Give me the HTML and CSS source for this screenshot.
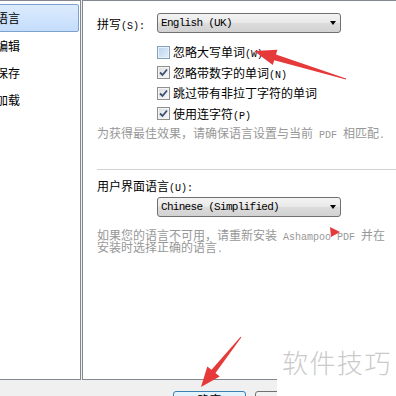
FILE: index.html
```html
<!DOCTYPE html>
<html lang="zh-CN">
<head>
<meta charset="utf-8">
<title>选项</title>
<link rel="stylesheet" href="styles.css">
</head>
<body>
<div class="window">
  <div class="panes">
    <ul class="nav">
      <li class="item sel">语言</li>
      <li class="item">编辑</li>
      <li class="item">保存</li>
      <li class="item">加载</li>
    </ul>
    <div class="content">
      <div class="row">
        <span class="label">拼写<span class="lat">(S):</span></span>
        <div class="select"><span class="val">English (UK)</span><span class="caret"></span></div>
      </div>
      <div class="checks">
        <div class="check"><span class="box hover"></span><span class="text">忽略大写单词<span class="lat">(W)</span></span></div>
        <div class="check"><span class="box on"><svg viewBox="0 0 11 11" width="11" height="11"><path d="M2 5.5 L4.5 8 L9 2.5" fill="none" stroke="#3d4f73" stroke-width="1.8"/></svg></span><span class="text">忽略带数字的单词<span class="lat">(N)</span></span></div>
        <div class="check"><span class="box on"><svg viewBox="0 0 11 11" width="11" height="11"><path d="M2 5.5 L4.5 8 L9 2.5" fill="none" stroke="#3d4f73" stroke-width="1.8"/></svg></span><span class="text">跳过带有非拉丁字符的单词</span></div>
        <div class="check"><span class="box on"><svg viewBox="0 0 11 11" width="11" height="11"><path d="M2 5.5 L4.5 8 L9 2.5" fill="none" stroke="#3d4f73" stroke-width="1.8"/></svg></span><span class="text">使用连字符<span class="lat">(P)</span></span></div>
      </div>
      <p class="hint">为获得最佳效果，请确保语言设置与当前<span class="lat"> PDF </span>相匹配<span class="lat">.</span></p>
      <hr class="sep">
      <div class="label2">用户界面语言<span class="lat">(U):</span></div>
      <div class="select ui"><span class="val">Chinese (Simplified)</span><span class="caret"></span></div>
      <p class="hint two">如果您的语言不可用，请重新安装<span class="lat"> Ashampoo PDF </span>并在<br>安装时选择正确的语言<span class="lat">.</span></p>
    </div>
  </div>
  <div class="footer">
    <button class="btn default">确定</button>
    <button class="btn">取消</button>
  </div>
</div>
<svg class="arrows" width="396" height="396" viewBox="0 0 396 396">
  <polygon points="254,51 277.4,49.7 276,54.5 346.1,78.5 345.9,79.5 274.2,60.3 272.8,65.1" fill="#e63a3a"/>
  <polygon points="201,387 207.3,366.4 211.5,369.8 240.6,336.7 241.4,337.3 215.5,373 219.7,376.4" fill="#e63a3a"/>
  <polygon points="330,227 340,232 331,237" fill="#e63a3a"/>
</svg>
<div class="watermark">软件技巧</div>
</body>
</html>
```
FILE: styles.css
```css
html, body {
  margin: 0;
  width: 396px;
  height: 396px;
  overflow: hidden;
}
body {
  position: relative;
  background: #f0f0f0;
  font-family: "Noto Sans CJK SC", sans-serif;
  font-size: 12px;
  color: #000;
}
.window {
  display: flex;
  flex-direction: column;
  height: 396px;
}
.panes {
  display: flex;
  gap: 1px;
  height: 380px;
}
.nav {
  list-style: none;
  margin: 0 0 0 -6px;
  padding: 3px 0 0;
  width: 87px;
  box-sizing: border-box;
  background: #fff;
  border: 1px solid #828790;
  border-left: none;
}
.item {
  height: 27px;
  line-height: 27px;
  padding-left: 2px;
  white-space: nowrap;
}
.item.sel {
  height: 28px;
  line-height: 26px;
  box-sizing: border-box;
  padding-left: 1px;
  margin-right: 1px;
  border: 1px solid #7da2ce;
  border-radius: 2px;
  background: linear-gradient(#dcebfc, #c4ddfc);
}
.content {
  flex: 1;
  min-width: 0;
  background: #fff;
  border: 1px solid #828790;
  border-right: none;
  padding: 12px 0 0 14px;
}
.row {
  display: flex;
  align-items: center;
  height: 20px;
}
.label {
  width: 60px;
  flex: none;
  white-space: nowrap;
}
.lat {
  font-family: "Liberation Mono", monospace;
  font-size: 10px;
  line-height: 0;
}
.select {
  width: 184px;
  height: 20px;
  box-sizing: border-box;
  border: 1px solid #707070;
  border-radius: 3px;
  background: linear-gradient(#f4f4f4, #e8e8e8 50%, #dcdcdc 51%, #d2d2d2);
  display: flex;
  align-items: center;
  justify-content: space-between;
  padding: 0 4px 0 3px;
}
.val {
  font-family: "Liberation Mono", monospace;
  font-size: 11px;
  letter-spacing: -0.7px;
}
.caret {
  width: 0;
  height: 0;
  border-left: 3.5px solid transparent;
  border-right: 3.5px solid transparent;
  border-top: 4px solid #000;
}
.checks {
  margin-top: 9px;
  padding-left: 60px;
  display: flex;
  flex-direction: column;
}
.check {
  display: flex;
  align-items: center;
  height: 20.5px;
  white-space: nowrap;
}
.text {
  line-height: 16px;
}
.box {
  width: 13px;
  height: 13px;
  box-sizing: border-box;
  margin-right: 3px;
  border: 1px solid #8e8f8f;
  box-shadow: inset 0 0 0 1px #f4f4f4;
  background: linear-gradient(135deg, #c9ccd1, #f4f4f4);
  display: flex;
  align-items: center;
  justify-content: center;
  flex: none;
}
.box.hover {
  border-color: #85a0bd;
  box-shadow: inset 0 0 0 1px #e8f2fb;
  background: linear-gradient(135deg, #b9d2eb, #e6f0fa);
}
.box.on {
  background: linear-gradient(135deg, #dcdee2, #f8f8f8);
}
.hint {
  margin: 2px 0 0;
  color: #979797;
  line-height: 14px;
  height: 14px;
  white-space: nowrap;
}
.hint.two {
  margin-top: 12px;
  line-height: 12px;
  height: 24px;
}
.sep {
  margin: 29px 0 0;
  border: 0;
  border-top: 1px solid #d2d2d2;
  height: 0;
}
.label2 {
  margin-top: 9px;
  line-height: 14px;
  height: 14px;
}
.select.ui {
  margin: 4px 0 0 60px;
}
.footer {
  display: flex;
  gap: 9px;
  padding: 11px 0 0 173px;
  height: 16px;
  box-sizing: border-box;
}
.btn {
  flex: none;
  width: 73px;
  height: 23px;
  margin: 0;
  padding: 2px 0 0;
  border: 1px solid #707070;
  border-radius: 3px;
  background: linear-gradient(#f2f2f2, #ebebeb 50%, #dddddd 51%, #cfcfcf);
  font-family: "Noto Sans CJK SC", sans-serif;
  font-size: 12px;
  line-height: 12px;
  color: #000;
  display: flex;
  justify-content: center;
  align-items: flex-start;
}
.btn.default {
  border-color: #3c7fb1;
  background: linear-gradient(#e5f4fc, #c4e5f6);
}
.arrows {
  position: absolute;
  left: 0;
  top: 0;
  pointer-events: none;
}
.watermark {
  position: absolute;
  left: 277px;
  top: 345px;
  width: 119px;
  height: 51px;
  box-sizing: border-box;
  padding-left: 5px;
  background: #fff;
  color: #cacaca;
  font-size: 26px;
  font-weight: 300;
  line-height: 34px;
  letter-spacing: 1.5px;
  white-space: nowrap;
}
```
